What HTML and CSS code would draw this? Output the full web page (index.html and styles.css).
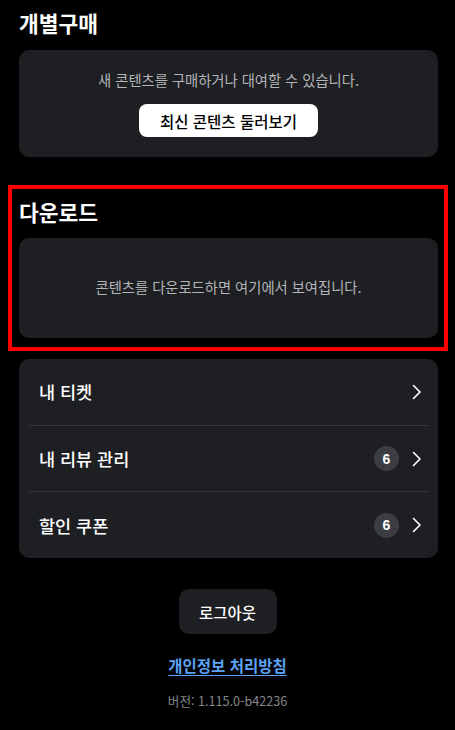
FILE: index.html
```html
<!DOCTYPE html>
<html lang="ko">
<head>
<meta charset="utf-8">
<link rel="stylesheet" href="styles.css">
</head>
<body>
<main class="page">
  <section class="sec sec-buy">
    <h2 class="sec-title">개별구매</h2>
    <div class="card card-buy">
      <p class="card-msg">새 콘텐츠를 구매하거나 대여할 수 있습니다.</p>
      <button class="btn-white">최신 콘텐츠 둘러보기</button>
    </div>
  </section>

  <section class="sec sec-download">
    <h2 class="sec-title">다운로드</h2>
    <div class="card card-empty">
      <p class="card-msg">콘텐츠를 다운로드하면 여기에서 보여집니다.</p>
    </div>
  </section>

  <ul class="card menu">
    <li class="menu-row">
      <span class="menu-label">내 티켓</span>
      <span class="menu-right">
        <svg class="chev" width="10" height="16" viewBox="0 0 10 16"><path d="M1.5 1.5 L8 8 L1.5 14.5" fill="none" stroke="#fff" stroke-width="1.6" stroke-linecap="round" stroke-linejoin="round"/></svg>
      </span>
    </li>
    <li class="menu-row">
      <span class="menu-label">내 리뷰 관리</span>
      <span class="menu-right">
        <span class="badge">6</span>
        <svg class="chev" width="10" height="16" viewBox="0 0 10 16"><path d="M1.5 1.5 L8 8 L1.5 14.5" fill="none" stroke="#fff" stroke-width="1.6" stroke-linecap="round" stroke-linejoin="round"/></svg>
      </span>
    </li>
    <li class="menu-row">
      <span class="menu-label">할인 쿠폰</span>
      <span class="menu-right">
        <span class="badge">6</span>
        <svg class="chev" width="10" height="16" viewBox="0 0 10 16"><path d="M1.5 1.5 L8 8 L1.5 14.5" fill="none" stroke="#fff" stroke-width="1.6" stroke-linecap="round" stroke-linejoin="round"/></svg>
      </span>
    </li>
  </ul>

  <div class="footer">
    <button class="btn-dark">로그아웃</button>
    <a class="policy" href="#">개인정보 처리방침</a>
    <p class="version">버전: 1.115.0-b42236</p>
  </div>
</main>
</body>
</html>
```

FILE: styles.css
```css
* { box-sizing: border-box; }
html, body {
  margin: 0;
  padding: 0;
  background: #000;
}
body {
  font-family: "Noto Sans CJK KR", "Noto Sans", sans-serif;
  color: #fff;
}
.page {
  padding: 8px 17px 0 19px;
  display: flex;
  flex-direction: column;
}
.sec-title {
  margin: 0;
  font-size: 21.5px;
  font-weight: 700;
  line-height: 30px;
}
.card {
  background: #1e1f23;
  border-radius: 10px;
}
.sec-buy .sec-title { margin-bottom: 12px; }
.card-buy {
  height: 107px;
  display: flex;
  flex-direction: column;
  align-items: center;
  padding-top: 19px;
}
.card-msg {
  margin: 0;
  font-size: 14.3px;
  line-height: 22px;
  color: #b4b5b8;
}
.btn-white {
  margin-top: 13px;
  height: 33px;
  width: 179px;
  border: none;
  border-radius: 8px;
  background: #fff;
  color: #000;
  font-family: inherit;
  font-size: 15.5px;
  font-weight: 500;
  padding: 0;
}
.sec-download {
  margin: 28px -10px 0 -11px;
  border: 4px solid #ff0000;
  padding: 8px 6px 9px 7px;
}
.sec-download .sec-title { margin-bottom: 11px; }
.card-empty {
  height: 100px;
  display: flex;
  align-items: center;
  justify-content: center;
  padding-bottom: 2px;
}
.menu {
  list-style: none;
  margin: 8px 0 0;
  padding: 0 10px;
  height: 199px;
  display: flex;
  flex-direction: column;
}
.menu-row {
  flex: 1;
  display: flex;
  align-items: center;
  justify-content: space-between;
  padding: 0 6px 0 10px;
  border-bottom: 1px solid #34363b;
}
.menu-row:last-child { border-bottom: none; }
.menu-label {
  font-size: 17.5px;
  font-weight: 500;
}
.menu-right {
  display: flex;
  align-items: center;
  gap: 13px;
}
.badge {
  width: 25px;
  height: 25px;
  border-radius: 50%;
  background: #3b3d43;
  display: flex;
  align-items: center;
  justify-content: center;
  font-family: "Liberation Sans", Arial, sans-serif;
  font-size: 14px;
  font-weight: 700;
  color: #fff;
}
.chev { display: block; }
.footer {
  display: flex;
  flex-direction: column;
  align-items: center;
  padding-top: 31px;
  padding-right: 2px;
}
.btn-dark {
  width: 98px;
  height: 45px;
  border: none;
  border-radius: 10px;
  background: #1e1f23;
  color: #fff;
  font-family: inherit;
  font-size: 15.5px;
  font-weight: 500;
  padding: 0;
}
.policy {
  margin-top: 19px;
  color: #5da3f5;
  font-size: 15.5px;
  font-weight: 700;
  line-height: 24px;
  text-decoration: underline;
  text-underline-offset: 3px;
}
.version {
  margin: 14px 0 0;
  font-size: 12.6px;
  line-height: 20px;
  color: #858689;
}
```
